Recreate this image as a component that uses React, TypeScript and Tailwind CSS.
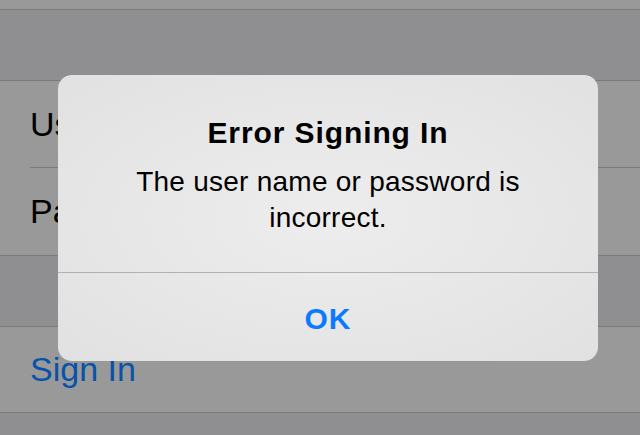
import React from "react";

export default function App() {
  return (
    <div
      className="relative w-[640px] h-[435px] overflow-hidden bg-[#8f8f92] text-black"
      style={{ fontFamily: '"Liberation Sans", Arial, sans-serif' }}
    >
      <div className="h-[10px] bg-[#999999] border-b border-[#7b7b7e]" />
      <div className="h-[71px] bg-[#8f8f92] border-b border-[#7b7b7e]" />
      <div className="bg-[#999999]">
        <div className="pl-[30px]">
          <div className="h-[87px] flex items-center border-b border-[#7b7b7e] text-[34px]">User Name</div>
        </div>
        <div className="h-[88px] pl-[30px] flex items-center border-b border-[#7b7b7e] text-[34px]">Password</div>
      </div>
      <div className="h-[71px] bg-[#8f8f92] border-b border-[#7b7b7e]" />
      <div className="h-[86px] pl-[30px] flex items-center bg-[#999999] border-b border-[#7b7b7e] text-[34px] text-[#0653a9]">
        Sign In
      </div>

      <div className="absolute left-[58px] top-[75px] w-[540px] h-[286px] rounded-[14px] bg-[radial-gradient(ellipse_at_center,#ededed_0%,#e6e6e6_60%,#e1e1e1_100%)] flex flex-col">
        <div className="pt-[40px] text-center font-bold text-[30px] leading-[36px] tracking-[0.9px]">
          Error Signing In
        </div>
        <div className="mt-[13px] text-center text-[28px] leading-[36px] tracking-[0.25px]">
          The user name or password is
          <br />
          incorrect.
        </div>
        <div className="mt-auto h-[89px] pt-[2px] border-t border-[#b1b1b3] flex items-center justify-center text-[#0a7aff] font-bold text-[30px] tracking-[1px]">
          OK
        </div>
      </div>
    </div>
  );
}
